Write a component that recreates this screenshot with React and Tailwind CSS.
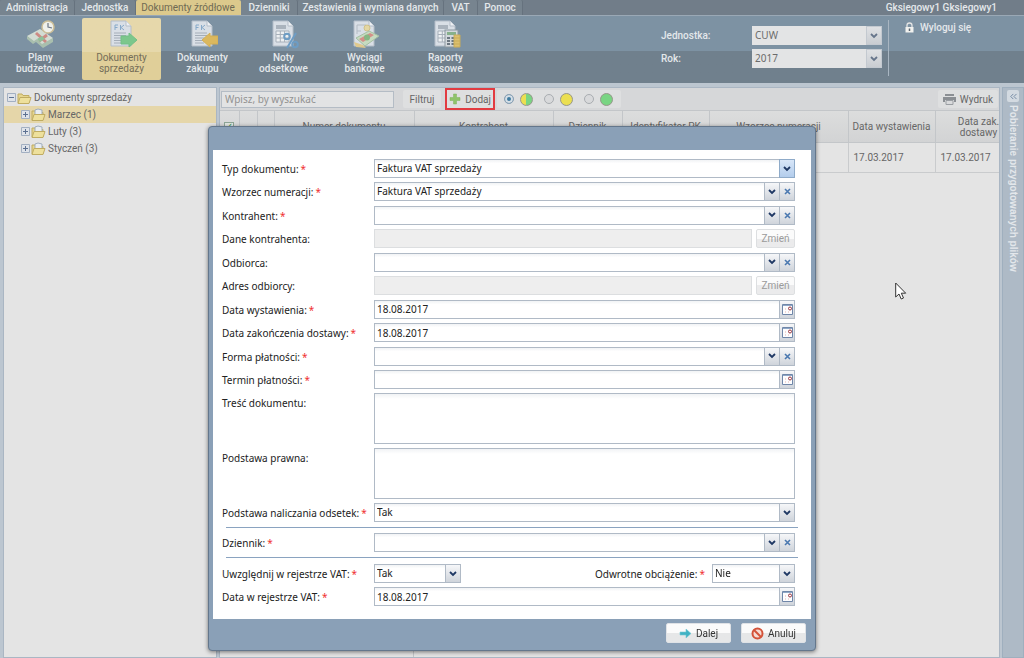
import React from 'react';
import { ChevronsLeft } from 'lucide-react';

const tabs = [
  { label: 'Administracja', width: 'w-[75px]' },
  { label: 'Jednostka', width: 'w-[61px]' },
  { label: 'Dokumenty źródłowe', width: 'w-[105px]', active: true },
  { label: 'Dzienniki', width: 'w-[57px]' },
  { label: 'Zestawienia i wymiana danych', width: 'w-[146px]' },
  { label: 'VAT', width: 'w-[34px]' },
  { label: 'Pomoc', width: 'w-[45px]' },
];

const Sheet = () => (
  <>
    <path d="M4 1h15l5 5v20H4z" fill="#d9dfe6" stroke="#b4bdc8" />
    <path d="M19 1v5h5" fill="#eef1f4" stroke="#b4bdc8" />
  </>
);

const SheetGrid = () => (
  <>
    <path d="M7 5h10v4H7z" fill="#aab3bd" />
    <path d="M7 11h13v11H7zM7 14.500h13M7 18h13M11.300 11v11M15.600 11v11" fill="#edf0f2" stroke="#a7b0ba" />
  </>
);

const PlansIcon = () => (
  <svg width="30" height="30" viewBox="0 0 30 30">
    <path d="M1 16l13-7 13 9-9 7-4-1-3-4-3 2z" fill="#d3dcd3" />
    <path d="M1 16l7 5 3-2 5 5 11-6v4l-10 6-7-6-3 2-6-5z" fill="#a9bfae" />
    <path d="M10 13l10 9M13 21l8-6" stroke="#cd8a84" strokeWidth="3" />
    <path d="M11 19l5-3 3 3-5 3z" fill="#8fc09a" />
    <circle cx="22" cy="7" r="6" fill="#eff0ea" stroke="#cdbf98" strokeWidth="1.500" />
    <path d="M22 3v4l4 1" fill="none" stroke="#6b7684" strokeWidth="1.200" />
  </svg>
);

const DocIcon = ({ kind }) => (
  <svg width="30" height="30" viewBox="0 0 30 30">
    <Sheet />
    <path d="M8 5v5M8 5h3M8 7.500h2.500M13.500 5v5M17 5l-3 2.500L17 10" fill="none" stroke="#86a9c9" />
    <path d="M7 13h12M7 15.500h12M7 18h9M7 20.500h9M7 23h9" stroke="#a4adb8" />
    {kind === 'sell' ? (
      <path d="M14 16h8v-3l8 7-8 7v-3h-8z" fill="#7cc78c" stroke="#73c086" />
    ) : (
      <path d="M30 16h-8v-3l-8 7 8 7v-3h8z" fill="#dbb85e" stroke="#d3ae55" />
    )}
  </svg>
);

const InterestIcon = () => (
  <svg width="30" height="30" viewBox="0 0 30 30">
    <Sheet />
    <SheetGrid />
    <g fill="none" stroke="#6d9cc4" strokeWidth="2">
      <circle cx="18" cy="16.500" r="2.800" />
      <circle cx="26" cy="24.500" r="2.800" />
      <path d="M27 13l-9 15" />
    </g>
  </svg>
);

const BankIcon = () => (
  <svg width="30" height="30" viewBox="0 0 30 30">
    <Sheet />
    <path d="M7 14V5h9M7 11h4" fill="none" stroke="#b3bbc4" />
    <circle cx="17" cy="8" r="3" fill="#e4d7a3" stroke="#d0c189" />
    <path d="M6 18l13-7 10 5-14 10z" fill="#c6dbc0" stroke="#a5bfa3" />
    <path d="M9 19l11-6 4 2-11 7z" fill="#d38f88" />
    <circle cx="17" cy="17.500" r="3" fill="#85b783" />
    <path d="M4 22l9 3 3 3-10-1z" fill="#dfc98d" />
  </svg>
);

const CashIcon = () => (
  <svg width="30" height="30" viewBox="0 0 30 30">
    <Sheet />
    <SheetGrid />
    <rect x="14" y="10" width="13" height="17" fill="#d3d8dc" stroke="#8c979f" />
    <path d="M16 12h9v3h-9z" fill="#86b08b" />
    <path d="M16 18h3M16 21h3M16 24h3M20.500 18h3M20.500 21h3M20.500 24h3" stroke="#6d7882" strokeWidth="2" />
    <path d="M23 15h6v12h-6z" fill="#dcc06f" stroke="#c9ac5a" />
    <path d="M23 18h6M23 21h6M23 24h6" stroke="#c9ac5a" />
  </svg>
);

const ribbon = [
  { lines: ['Plany', 'budżetowe'], icon: <PlansIcon /> },
  { lines: ['Dokumenty', 'sprzedaży'], icon: <DocIcon kind="sell" />, active: true },
  { lines: ['Dokumenty', 'zakupu'], icon: <DocIcon kind="buy" /> },
  { lines: ['Noty', 'odsetkowe'], icon: <InterestIcon /> },
  { lines: ['Wyciągi', 'bankowe'], icon: <BankIcon /> },
  { lines: ['Raporty', 'kasowe'], icon: <CashIcon /> },
];

const months = [
  { name: 'Marzec (1)', active: true },
  { name: 'Luty (3)' },
  { name: 'Styczeń (3)' },
];

const columns = [
  { label: '', width: 'w-[19px]' },
  { label: '', width: 'w-[18px]' },
  { label: '', width: 'w-[17px]' },
  { label: 'Numer dokumentu', width: 'w-[140px]' },
  { label: 'Kontrahent', width: 'w-[139px]' },
  { label: 'Dziennik', width: 'w-[69px]' },
  { label: 'Identyfikator PK', width: 'w-[87px]' },
  { label: 'Wzorzec numeracji', width: 'w-[139px]' },
  { label: 'Data wystawienia', width: 'w-[87px]', value: '17.03.2017' },
  { label: 'Data zak. dostawy', width: 'w-[87px]', value: '17.03.2017' },
];

const Chevron = ({ color = '#1f3864' }) => (
  <svg width="8" height="6" viewBox="0 0 8 6">
    <path d="M1 1l3 3 3-3" fill="none" stroke={color} strokeWidth="1.800" />
  </svg>
);

const CalendarIcon = () => (
  <svg width="11" height="11" viewBox="0 0 11 11">
    <path d="M.5.500h10v10H.5z" fill="#fdfdfe" stroke="#6f86a8" />
    <path d="M1 1.500h9" stroke="#8ea6c6" />
    <path d="M3 5h1M3 8h1M6 8h1" stroke="#e3b2ae" />
    <circle cx="8" cy="4.500" r="1.500" fill="#fff" stroke="#98323a" />
  </svg>
);

const FolderIcon = ({ papers }) => (
  <svg width="15" height="14" viewBox="0 0 15 14">
    <path d="M1 12V3h4l1 1.500h6V12z" fill="#e6d68f" stroke="#c0ac62" />
    {papers && <path d="M4 7V2l3-1 4 1v5z" fill="#e9edf2" stroke="#a0adbd" />}
    <path d="M1 12.500l2-6h11l-2 6z" fill="#eee09c" stroke="#c0ac62" />
  </svg>
);

const Toggle = ({ open }) => (
  <svg width="9" height="9" viewBox="0 0 9 9">
    <path d="M.5.500h8v8h-8z" fill="#dfe3e9" stroke="#a3b0c2" />
    <path d={open ? 'M2 4.500h5' : 'M2 4.500h5M4.500 2v5'} stroke="#5d7192" />
  </svg>
);

const fieldBase =
  'h-full w-full min-w-0 appearance-none rounded-none border border-[#b0bac6] bg-linear-to-b from-[#f1f3f5] via-white via-20% to-white px-[2px] text-[#222] outline-none';
const sideButton =
  'flex w-[15px] shrink-0 items-center justify-center border border-l-0 border-[#b0bac6] bg-linear-to-b from-[#f6f7f9] to-[#cfd4db]';

const Label = ({ htmlFor, children, required, className = 'w-[152px]' }) => (
  <label htmlFor={htmlFor} className={`${className} shrink-0 pt-[3px] leading-[14px] whitespace-nowrap text-[#222]`}>
    {children}
    {required && <span className="ml-[2px] text-[#f03030]">*</span>}
  </label>
);

const SelectBox = ({ id, value, focused }) => (
  <div className="relative h-[19px] min-w-0 flex-1">
    <select id={id} defaultValue={value} className={fieldBase}>
      <option>{value}</option>
    </select>
    <span
      className={`pointer-events-none absolute inset-y-0 right-0 flex w-4 items-center justify-center border bg-linear-to-b ${
        focused ? 'border-[#8fabc9] from-[#d8e6f8] to-[#b3cdec]' : 'border-[#b0bac6] from-[#f6f7f9] to-[#cfd4db]'
      }`}
    >
      <Chevron />
    </span>
  </div>
);

const Field = ({ id, label, required, type, value = '' }) => (
  <div className="flex">
    <Label htmlFor={id} required={required}>{label}</Label>
    {type === 'select' && <SelectBox id={id} value={value} focused={id === 'typ'} />}
    {type === 'combo' && (
      <>
        <SelectBox id={id} value={value} />
        <button type="button" aria-label="Wyczyść" className={sideButton}>
          <svg width="7" height="7" viewBox="0 0 7 7">
            <path d="M1 1l5 5M6 1L1 6" stroke="#4a78b0" strokeWidth="1.600" />
          </svg>
        </button>
      </>
    )}
    {type === 'date' && (
      <>
        <div className="h-[19px] flex-1">
          <input id={id} type="text" defaultValue={value} className={fieldBase} />
        </div>
        <button type="button" aria-label="Kalendarz" className={sideButton}>
          <CalendarIcon />
        </button>
      </>
    )}
    {type === 'readonly' && (
      <>
        <input id={id} type="text" disabled className="h-[19px] min-w-0 flex-1 border border-[#dcdee0] bg-[#eeeeee]" />
        <button
          type="button"
          disabled
          className="ml-1 h-[19px] w-[39px] rounded-xs border border-[#dddfe1] bg-linear-to-b from-[#fbfbfb] from-50% to-[#ebebec] to-50% font-[family-name:Roboto,sans-serif] text-[#9a9a9a]"
        >
          Zmień
        </button>
      </>
    )}
    {type === 'textarea' && (
      <textarea
        id={id}
        className="h-[51px] min-w-0 flex-1 resize-none border border-[#b0bac6] bg-linear-to-b from-[#f1f3f5] via-white via-10% to-white outline-none"
      />
    )}
  </div>
);

const fields = [
  { id: 'typ', label: 'Typ dokumentu:', required: true, type: 'select', value: 'Faktura VAT sprzedaży' },
  { id: 'wzorzec', label: 'Wzorzec numeracji:', required: true, type: 'combo', value: 'Faktura VAT sprzedaży' },
  { id: 'kontrahent', label: 'Kontrahent:', required: true, type: 'combo' },
  { id: 'dane', label: 'Dane kontrahenta:', type: 'readonly' },
  { id: 'odbiorca', label: 'Odbiorca:', type: 'combo' },
  { id: 'adres', label: 'Adres odbiorcy:', type: 'readonly' },
  { id: 'wystawienie', label: 'Data wystawienia:', required: true, type: 'date', value: '18.08.2017' },
  { id: 'dostawa', label: 'Data zakończenia dostawy:', required: true, type: 'date', value: '18.08.2017' },
  { id: 'forma', label: 'Forma płatności:', required: true, type: 'combo' },
  { id: 'termin', label: 'Termin płatności:', required: true, type: 'date' },
];

const HeaderSelect = ({ id, label, value }) => (
  <div className="flex items-center">
    <label htmlFor={id} className="w-[91px]">{label}</label>
    <div className="relative h-[19px] w-[130px]">
      <select
        id={id}
        defaultValue={value}
        className="h-full w-full appearance-none bg-[#e3e4e5] px-[3px] font-[family-name:Noto_Sans,sans-serif] font-normal text-[#6b6b6b] outline-none"
      >
        <option>{value}</option>
      </select>
      <span className="pointer-events-none absolute inset-y-0 right-0 flex w-4 items-center justify-center border border-[#c3c9d0] bg-linear-to-b from-[#dfe1e4] to-[#c9cdd2]">
        <Chevron color="#66758b" />
      </span>
    </div>
  </div>
);

const Header = () => (
  <header className="font-medium text-[#e4e8eb]">
    <div className="flex h-4 items-stretch justify-between border-b border-[#9aa8b5] bg-[#717d89]">
      <nav className="flex">
        {tabs.map((t) => (
          <button
            key={t.label}
            type="button"
            className={`${t.width} rounded-t-xs border-r whitespace-nowrap ${
              t.active ? 'border-[#dcc98c] bg-[#dcc98c] font-normal text-[#6f6953]' : 'border-[#66727e] bg-[#77848f]'
            }`}
          >
            {t.label}
          </button>
        ))}
      </nav>
      <span className="pr-[27px] leading-[15px]">Gksiegowy1 Gksiegowy1</span>
    </div>

    <div className="flex h-[67px] justify-between bg-linear-to-b from-[#7d92a3] from-52% to-[#70808d] to-52% pl-px">
      <div className="flex gap-[2px] pt-[2px]">
        {ribbon.map((r) => (
          <button
            key={r.lines.join(' ')}
            type="button"
            className={`flex h-[62px] w-[79px] flex-col items-center rounded-xs pt-[2px] leading-[11px] ${
              r.active ? 'bg-linear-to-b from-[#e6d8ab] from-55% to-[#e0cf99] to-55% font-normal text-[#746d58]' : ''
            }`}
          >
            {r.icon}
            <span className="mt-[2px]">{r.lines[0]}</span>
            <span>{r.lines[1]}</span>
          </button>
        ))}
      </div>

      <div className="flex pt-1">
        <div className="flex flex-col gap-1 pt-[6px] pr-[6px]">
          <HeaderSelect id="jednostka" label="Jednostka:" value="CUW" />
          <HeaderSelect id="rok" label="Rok:" value="2017" />
        </div>
        <div className="h-14 w-[136px] border-l border-[#a9b6c2] pl-4">
          <a href="#wyloguj" className="flex h-[14px] items-center gap-[6px]">
            <svg width="9" height="11" viewBox="0 0 9 11">
              <path d="M2 5V3.500a2.500 2.500 0 015 0V5" fill="none" stroke="#e4e4e4" strokeWidth="1.300" />
              <path d="M.5 5h8v5.500h-8z" fill="#f1f1ee" />
              <path d="M4.500 6.500v2.500" stroke="#5b6670" strokeWidth="1.500" />
            </svg>
            Wyloguj się
          </a>
        </div>
      </div>
    </div>
  </header>
);

const Tree = () => (
  <aside className="w-[214px] shrink-0 border border-[#aab6c3] bg-[#e4e4e4] pt-px">
    <div className="flex h-[17px] items-center gap-px pl-[3px]">
      <Toggle open />
      <FolderIcon />
      <span className="ml-px">Dokumenty sprzedaży</span>
    </div>
    {months.map((m) => (
      <div key={m.name} className={`flex h-[17px] items-center gap-px pl-[17px] ${m.active ? 'bg-[#e5d6a9]' : ''}`}>
        <Toggle />
        <FolderIcon papers />
        <span className="ml-px">{m.name}</span>
      </div>
    ))}
  </aside>
);

const StatusOption = ({ label, checked, dot }) => (
  <label className="flex items-center gap-[6px]">
    <input
      type="radio"
      name="status"
      aria-label={label}
      defaultChecked={checked}
      className="h-[10px] w-[10px] appearance-none rounded-full border border-[#a9adb1] bg-[#d8d9db] checked:border-[#8fa3b5] checked:bg-[#3f7ba0] checked:shadow-[inset_0_0_0_2px_#d5dfe7]"
    />
    <span className={`h-[13px] w-[13px] rounded-full border border-[#97978c] ${dot}`} />
  </label>
);

const Documents = () => (
  <main className="flex min-w-0 flex-1 flex-col overflow-hidden border border-[#aab6c3] bg-[#e4e4e4]">
    <div className="flex h-[22px] shrink-0 items-center bg-[#d6d7d9] pl-px">
      <input
        type="text"
        aria-label="Szukaj"
        placeholder="Wpisz, by wyszukać"
        className="h-[17px] w-[173px] border border-[#b4bcc5] bg-[#e2e3e4] px-[3px] font-[family-name:Noto_Sans,sans-serif] outline-none placeholder:text-[#929292]"
      />
      <button type="button" className="ml-[9px] h-[18px] w-[38px] rounded-xs bg-[#dedfe0]">Filtruj</button>
      <button
        type="button"
        className="ml-1 flex h-[22px] w-[50px] items-center justify-center gap-1 border-2 border-[#e23b41] bg-[#dedfe0]"
      >
        <svg width="12" height="12" viewBox="0 0 12 12">
          <path d="M4.500 1h3v3.500H11v3H7.500V11h-3V7.500H1v-3h3.500z" fill="#8fc46a" stroke="#7fb35c" strokeWidth=".5" />
        </svg>
        Dodaj
      </button>
      <div className="ml-[2px] flex h-[18px] items-center gap-[11px] rounded-xs bg-[#dedfe0] pr-2 pl-[7px]">
        <StatusOption label="Wszystkie" checked dot="bg-linear-to-r from-[#ebdf51] from-50% to-[#79d583] to-50%" />
        <StatusOption label="Żółte" dot="bg-[#ebdf51]" />
        <StatusOption label="Zielone" dot="bg-[#79d583]" />
      </div>
      <button type="button" className="mr-px ml-auto flex h-[18px] items-center gap-1 rounded-xs bg-[#dedfe0] px-[5px]">
        <svg width="13" height="11" viewBox="0 0 13 11">
          <path d="M2 0h9v2H2zM0 3h13v5h-2V6H2v2H0z" fill="#8b8f94" />
          <path d="M3 6.500h7v4H3z" fill="#d9dadc" stroke="#9a9ea3" />
        </svg>
        Wydruk
      </button>
    </div>

    <div className="flex-1 overflow-hidden">
      <table className="w-[802px] table-fixed border-collapse">
        <thead>
          <tr className="h-8 bg-linear-to-b from-[#dcdddd] to-[#d2d3d4]">
            {columns.map((c, i) => (
              <th key={i} className={`${c.width} border border-l-0 border-[#c3c6c9] px-1 text-center leading-[11px] font-normal`}>
                {i === 0 ? (
                  <input
                    type="checkbox"
                    defaultChecked
                    aria-label="Zaznacz wszystkie"
                    className="flex h-[10px] w-[10px] appearance-none items-center justify-center border border-[#8fa697] bg-[#e3e8e4] before:text-[#3f9a4e] checked:before:content-['✓']"
                  />
                ) : (
                  <span className={i === 9 ? 'mx-auto block w-12' : 'whitespace-nowrap'}>{c.label}</span>
                )}
              </th>
            ))}
          </tr>
        </thead>
        <tbody>
          <tr className="h-[30px]">
            {columns.map((c, i) => (
              <td key={i} className="border border-l-0 border-[#c9cbcd] px-[5px] text-left">{c.value}</td>
            ))}
          </tr>
        </tbody>
      </table>
    </div>
    <div className="h-2 w-[194px] border-r border-[#c3c6c9]" />
  </main>
);

const SidePanel = () => (
  <aside className="flex w-[22px] shrink-0 flex-col items-center border border-[#9fafbe] bg-[#aebac6] pt-[2px]">
    <button type="button" aria-label="Rozwiń" className="flex h-3 w-3 items-center justify-center rounded-xs bg-[#d3dae1]">
      <ChevronsLeft size={11} color="#6d84a0" />
    </button>
    <span className="mt-[3px] font-[family-name:Liberation_Sans,sans-serif] leading-[14px] font-bold whitespace-nowrap text-[#e3e7eb] [writing-mode:vertical-rl]">
      Pobieranie przygotowanych plików
    </span>
  </aside>
);

const footerButton =
  'flex h-5 w-[65px] items-center justify-center gap-1 rounded-xs border border-[#dfe2e6] bg-linear-to-b from-[#fbfbfb] from-50% to-[#e6e7e8] to-50% font-[family-name:Roboto,sans-serif] text-[#333]';

const DocumentDialog = () => (
  <div className="fixed inset-0 flex items-start justify-center pt-[126px] font-[family-name:Noto_Sans,sans-serif]">
    <form
      role="dialog"
      aria-label="Nowy dokument"
      className="w-[608px] rounded-[4px] border border-[#64778c] bg-[#8aa0b7] px-1 pt-[23px] shadow-[0_1px_4px_rgba(0,0,0,0.5)]"
    >
      <div className="bg-white pt-[9px] pr-4 pb-[13px] pl-[9px]">
        <div className="flex h-[230px] flex-col justify-between">
          {fields.map((f) => <Field key={f.id} {...f} />)}
        </div>
        <div className="mt-1 flex flex-col gap-1">
          <Field id="tresc" label="Treść dokumentu:" type="textarea" />
          <Field id="prawna" label="Podstawa prawna:" type="textarea" />
          <Field id="odsetki" label="Podstawa naliczania odsetek:" required type="select" value="Tak" />
        </div>
        <hr className="mt-[5px] mr-[-3px] mb-[5px] ml-1 border-t-[#8aa3c0]" />
        <Field id="dziennik" label="Dziennik:" required type="combo" />
        <hr className="mt-[5px] mr-[-3px] mb-[6px] ml-1 border-t-[#8aa3c0]" />
        <div className="flex justify-between">
          <div className="flex">
            <Label htmlFor="rejestr" required>Uwzględnij w rejestrze VAT:</Label>
            <div className="flex w-[87px]">
              <SelectBox id="rejestr" value="Tak" />
            </div>
          </div>
          <div className="flex">
            <Label htmlFor="odwrotne" required className="w-[117px]">Odwrotne obciążenie:</Label>
            <div className="flex w-[83px]">
              <SelectBox id="odwrotne" value="Nie" />
            </div>
          </div>
        </div>
        <div className="mt-1">
          <Field id="datavat" label="Data w rejestrze VAT:" required type="date" value="18.08.2017" />
        </div>
      </div>
      <div className="flex justify-end gap-[10px] pt-1 pr-[5px] pb-[7px]">
        <button type="button" className={footerButton}>
          <svg width="13" height="11" viewBox="0 0 13 11">
            <path d="M1 4h6V1l5 4.500L7 10V7H1z" fill="#3fb2c4" stroke="#75c8d4" strokeWidth=".6" />
          </svg>
          Dalej
        </button>
        <button type="button" className={footerButton}>
          <svg width="13" height="13" viewBox="0 0 13 13">
            <circle cx="6.500" cy="6.500" r="5" fill="#f6dcd4" stroke="#d4533a" strokeWidth="2" />
            <path d="M3 3l7 7" stroke="#d4533a" strokeWidth="2" />
          </svg>
          Anuluj
        </button>
      </div>
    </form>
  </div>
);

const Cursor = () => (
  <svg width="12" height="18" viewBox="0 0 12 18" className="pointer-events-none fixed top-[282px] left-[895px]">
    <path d="M.7 1v14l3.300-3 2.200 5 2.300-1-2.200-4.800h4.400z" fill="#fff" stroke="#333" />
  </svg>
);

export default function App() {
  return (
    <div className="flex h-screen flex-col bg-[#bcc6d0] font-[family-name:Roboto,sans-serif] text-[10px] text-[#666]">
      <Header />
      <div className="flex min-h-0 flex-1 pt-1 pl-[3px]">
        <Tree />
        <div className="ml-[2px] flex min-w-0 flex-1">
          <Documents />
        </div>
        <div className="ml-[2px] flex">
          <SidePanel />
        </div>
      </div>
      <DocumentDialog />
      <Cursor />
    </div>
  );
}
